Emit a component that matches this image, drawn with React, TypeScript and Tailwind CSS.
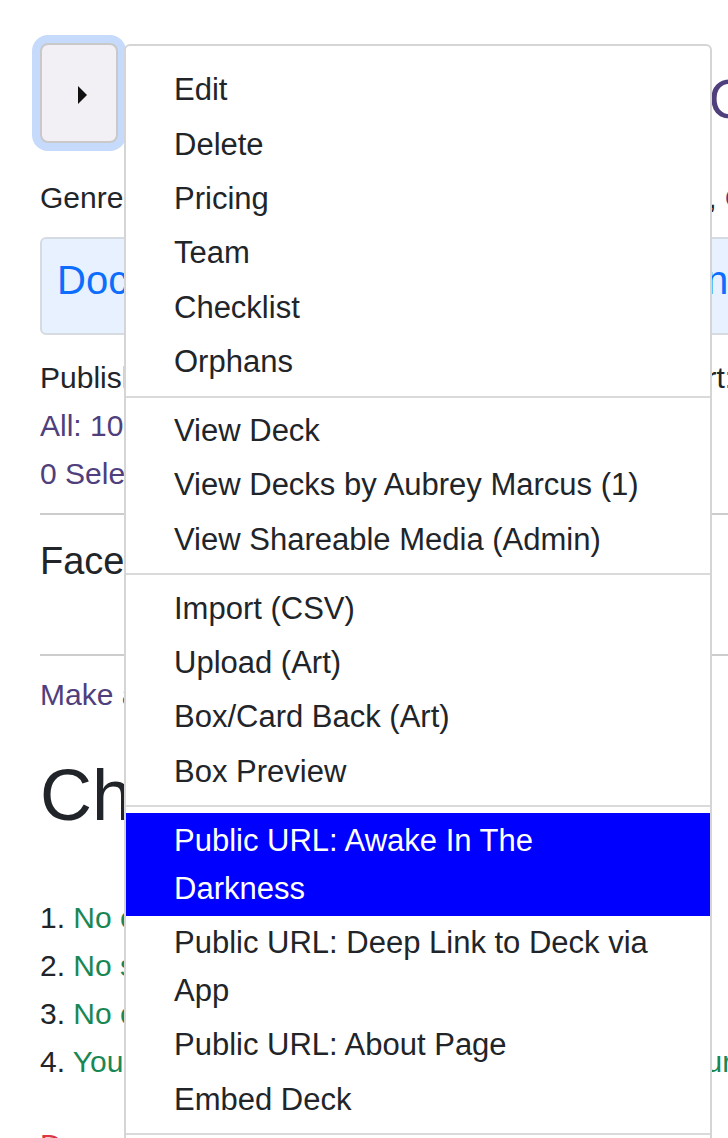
import React from 'react';

type MenuEntry = { label: string; active?: boolean } | 'divider';

const menu: MenuEntry[] = [
  { label: 'Edit' },
  { label: 'Delete' },
  { label: 'Pricing' },
  { label: 'Team' },
  { label: 'Checklist' },
  { label: 'Orphans' },
  'divider',
  { label: 'View Deck' },
  { label: 'View Decks by Aubrey Marcus (1)' },
  { label: 'View Shareable Media (Admin)' },
  'divider',
  { label: 'Import (CSV)' },
  { label: 'Upload (Art)' },
  { label: 'Box/Card Back (Art)' },
  { label: 'Box Preview' },
  'divider',
  { label: 'Public URL: Awake In The Darkness', active: true },
  { label: 'Public URL: Deep Link to Deck via App' },
  { label: 'Public URL: About Page' },
  { label: 'Embed Deck' },
  'divider',
  { label: 'Export (PDF)' },
  { label: 'Print Order' },
];

const DeckMenu = () => (
  <div className="absolute left-[124px] top-[44px] w-[588px] rounded-[6px] border-2 border-[#d5d5d5] bg-white pt-[17px] pb-[16px]">
    {menu.map((item, i) =>
      item === 'divider' ? (
        <div key={i} className="my-[6.25px] h-0 border-t-2 border-[#dadada]" />
      ) : (
        <a
          key={i}
          className={
            item.active
              ? 'block bg-[#0000ff] py-[3.2px] pl-[48px] pr-[49px] text-[31px] leading-[48px] text-white'
              : 'block py-[3.2px] pl-[48px] pr-[49px] text-[31px] leading-[48px] text-[#212529]'
          }
        >
          {item.label}
        </a>
      )
    )}
  </div>
);

const checklist = [
  'No empty cards found.',
  'No spelling errors found.',
  'No cards missing art.',
  'You have not uploaded a card back image to your deck.',
];

export default function App() {
  return (
    <div className="relative h-[1138px] w-[728px] overflow-hidden bg-white font-['Liberation_Sans',Arial,sans-serif] text-[#212529]">
      <div className="pl-[40px]">
        <div className="flex pt-[43px]">
          <button className="flex h-[100px] w-[78px] shrink-0 items-center justify-center rounded-[8px] border-2 border-[#c9c9c9] bg-[#f2eff5] pl-[8px] pt-[4px] shadow-[0_0_0_8px_#c6dafc]">
            <svg width="10" height="18" viewBox="0 0 10 18">
              <polygon points="0,0 9,9 0,18" fill="#111" />
            </svg>
          </button>
          <h1 className="ml-[14px] mt-[29px] whitespace-nowrap text-[55px] leading-[55px] text-[#4f3f7c]">
            Awake in the Darkness Oracle
          </h1>
        </div>

        <div className="mt-[31px] whitespace-nowrap text-[30px] leading-[48px]">
          Genre: <span className="text-[#4f3f7c]">Spirituality</span>,{' '}
          <span className="text-[#4f3f7c]">Personal Growth</span>,{' '}
          <span className="text-[#4f3f7c]">Psychedelics</span>,{' '}
          <span className="text-[#4f3f7c]">Consciousness</span>
        </div>

        <div className="mt-[15px] flex h-[98px] w-[720px] items-center rounded-[6px] border-2 border-[#d6dbe2] bg-[#e7f1ff] pb-[12px] pl-[15px] whitespace-nowrap text-[40px] text-[#0d6efd]">
          Documents, Printer Files &amp; Instructions:
        </div>

        <div className="mt-[19px] whitespace-nowrap text-[30px] leading-[48px]">
          Published: Draft | Card Size: Tarot | Cards: 100 | Art: Ready
        </div>
        <div className="whitespace-nowrap text-[30px] leading-[48px] text-[#4f3f7c]">All: 100</div>
        <div className="whitespace-nowrap text-[30px] leading-[48px] text-[#4f3f7c]">0 Selected</div>

        <div className="mt-[15px] w-[700px] border-t-2 border-[#cccccc]" />

        <h2 className="mt-[22px] whitespace-nowrap text-[38px] font-medium leading-[48px]">Faces</h2>

        <div className="mt-[69px] w-[700px] border-t-2 border-[#cccccc]" />

        <div className="mt-[15px] whitespace-nowrap text-[30px] leading-[48px] text-[#4f3f7c]">Make a Copy</div>

        <h2 className="mt-[33px] whitespace-nowrap text-[72px] leading-[86px]">Checklist</h2>

        <ol className="mt-[56px] text-[30px] leading-[48px]">
          {checklist.map((c, i) => (
            <li key={i} className="whitespace-nowrap">
              {i + 1}. <span className="text-[#198754]">{c}</span>
            </li>
          ))}
        </ol>

        <div className="mt-[35px] whitespace-nowrap text-[30px] leading-[48px] text-[#dc3545]">Danger Zone</div>
      </div>

      <DeckMenu />
    </div>
  );
}
